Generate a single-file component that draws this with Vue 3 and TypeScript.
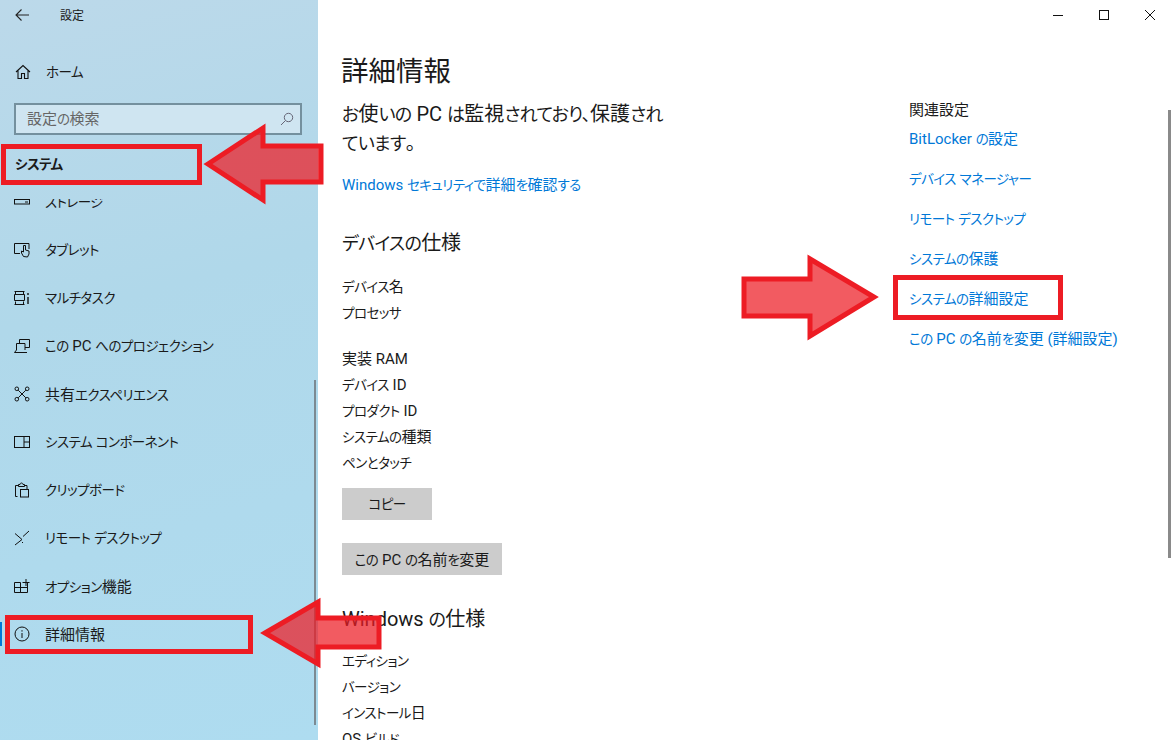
<script setup lang="ts">
import { h } from "vue"

// kana runs are narrower than kanji in the original UI font
const T = (props: { s: string }) =>
  (props.s.match(/[\u3040-\u30ff、]+|[^\u3040-\u30ff、]+/g) ?? []).map((run) =>
    /[\u3040-\u30ff、]/.test(run) ? h("span", { class: "kana" }, run) : run
  )

const navItems = [
  { label: "ストレージ", icon: "storage" },
  { label: "タブレット", icon: "tablet" },
  { label: "マルチタスク", icon: "multi" },
  { label: "この PC へのプロジェクション", icon: "project" },
  { label: "共有エクスペリエンス", icon: "share" },
  { label: "システム コンポーネント", icon: "components" },
  { label: "クリップボード", icon: "clip" },
  { label: "リモート デスクトップ", icon: "remote" },
  { label: "オプション機能", icon: "options" },
  { label: "詳細情報", icon: "info" },
]

const deviceRows = ["デバイス名", "プロセッサ"]
const deviceRows2 = ["実装 RAM", "デバイス ID", "プロダクト ID", "システムの種類", "ペンとタッチ"]
const windowsRows = ["エディション", "バージョン", "インストール日", "OS ビルド"]
const links = [
  "BitLocker の設定",
  "デバイス マネージャー",
  "リモート デスクトップ",
  "システムの保護",
  "システムの詳細設定",
  "この PC の名前を変更 (詳細設定)",
]
</script>

<template>
  <div class="window">
    <aside class="sidebar">
      <div class="titlebar">
        <svg class="back" width="16" height="16" viewBox="0 0 16 16" fill="none" stroke="#222" stroke-width="1.1">
          <path d="M2 8h13M7.5 2.5 2 8l5.5 5.5" />
        </svg>
        <span class="app-name">設定</span>
      </div>
      <div class="home">
        <svg width="16" height="16" viewBox="0 0 16 16" fill="none" stroke="#111" stroke-width="1.1">
          <path d="M1 8 8 1.5 15 8M3 6.5V14.5H6.5V9.5H9.5V14.5H13V6.5" />
        </svg>
        <span class="label"><T s="ホーム" /></span>
      </div>
      <div class="search">
        <span class="label"><T s="設定の検索" /></span>
        <svg width="14" height="14" viewBox="0 0 14 14" fill="none" stroke="#667" stroke-width="1">
          <circle cx="8.5" cy="5.5" r="4.2" />
          <path d="M5.5 8.5 1 13" />
        </svg>
      </div>
      <h2 class="section"><T s="システム" /></h2>
      <div class="nav">
        <ul>
          <li v-for="item in navItems" :key="item.label" :class="{ active: item.icon === 'info' }">
            <svg width="16" height="16" viewBox="0 0 16 16" fill="none" stroke="#111" stroke-width="1">
              <template v-if="item.icon === 'storage'">
                <rect x="0.5" y="5.5" width="15" height="4.5" />
                <path d="M11 8h3" />
              </template>
              <template v-else-if="item.icon === 'tablet'">
                <path d="M6 11.5H.5V1.5H15V7" />
                <path d="M9.5 14.5 7.5 11V9l2 1V3.5h2V8l3.5 1v3l-1.5 3z" />
              </template>
              <template v-else-if="item.icon === 'multi'">
                <path d="M.5 1.5h10M.5 14.5h10M1.5 14.5v-3M9.5 14.5v-3M.5 4.5h10v6H.5zM1.5 1.5v3M9.5 1.5v3" />
                <path d="M14 3v2M14 7v7" stroke-width="1.4" />
              </template>
              <template v-else-if="item.icon === 'project'">
                <path d="M5.5 5V1.5H15.5V9.5H11" />
                <path d="M2.5 12V5.5H11V12M.5 14.5h12.5M.5 14.5l2-2.5" />
              </template>
              <template v-else-if="item.icon === 'share'">
                <circle cx="2.8" cy="2.8" r="1.8" />
                <circle cx="13.2" cy="2.8" r="1.8" />
                <circle cx="2.8" cy="13.2" r="1.8" />
                <circle cx="13.2" cy="13.2" r="1.8" />
                <path d="M4.2 4.2 11.8 11.8M11.8 4.2 4.2 11.8" />
              </template>
              <template v-else-if="item.icon === 'components'">
                <rect x="0.5" y="2.5" width="15" height="11" />
                <path d="M10 2.5v11M10 8h5.5" />
              </template>
              <template v-else-if="item.icon === 'clip'">
                <path d="M3.5 14.5H1.5V3.5H4M11 3.5h2V7" />
                <path d="M4.5 4.5V2.5H6c0-2 3-2 3 0h1.5v2z" />
                <rect x="6.5" y="7.5" width="8" height="7.5" />
              </template>
              <template v-else-if="item.icon === 'remote'">
                <path d="M1 3.5 8 9.5 1 15M15 1 9 6.5M9 12l-1 1" />
              </template>
              <template v-else-if="item.icon === 'options'">
                <path d="M.5 4.5h6v10h-6zM.5 9.5h13M6.5 9.5v5h7v-10M8.5 4.5h7M12 1v7" />
              </template>
              <template v-else>
                <circle cx="8" cy="8" r="7" />
                <path d="M8 7v5M8 4.2v1.4" />
              </template>
            </svg>
            <span class="label"><T :s="item.label" /></span>
          </li>
        </ul>
      </div>
      <div class="side-scroll"></div>
    </aside>

    <main class="main">
      <div class="controls">
        <svg width="12" height="12" viewBox="0 0 12 12" fill="none" stroke="#111" stroke-width="1">
          <path d="M1 6.5h10" />
        </svg>
        <svg width="12" height="12" viewBox="0 0 12 12" fill="none" stroke="#111" stroke-width="1">
          <rect x="1.5" y="1.5" width="9" height="9" />
        </svg>
        <svg width="12" height="12" viewBox="0 0 12 12" fill="none" stroke="#111" stroke-width="1">
          <path d="M1 1l10 10M11 1 1 11" />
        </svg>
      </div>
      <div class="columns">
        <section class="info">
          <h1>詳細情報</h1>
          <p class="status"><T s="お使いの PC は監視されており、保護され" /><br /><T s="ています。" /></p>
          <a class="link security"><T s="Windows セキュリティで詳細を確認する" /></a>
          <h3 class="device-title"><T s="デバイスの仕様" /></h3>
          <div class="rows">
            <div v-for="r in deviceRows" :key="r"><T :s="r" /></div>
          </div>
          <div class="rows second">
            <div v-for="r in deviceRows2" :key="r"><T :s="r" /></div>
          </div>
          <button class="copy"><T s="コピー" /></button>
          <button class="rename"><T s="この PC の名前を変更" /></button>
          <h3 class="win-title"><T s="Windows の仕様" /></h3>
          <div class="rows">
            <div v-for="r in windowsRows" :key="r"><T :s="r" /></div>
          </div>
        </section>
        <section class="related">
          <div class="related-title">関連設定</div>
          <a v-for="l in links" :key="l" class="link"><T :s="l" /></a>
        </section>
      </div>
      <div class="main-scroll"></div>
    </main>

    <svg class="marks" width="1172" height="740" viewBox="0 0 1172 740">
      <g fill="none" stroke="#ed1c24" stroke-width="5">
        <rect x="3.5" y="146.5" width="196" height="36" />
        <rect x="7.5" y="617.5" width="243" height="34" />
        <rect x="895.5" y="277.5" width="165" height="40" />
      </g>
      <g fill="rgba(237,28,36,0.72)" stroke="#ed1c24" stroke-width="5" stroke-linejoin="miter">
        <path d="M208 164 263 128V146H321V182H263V200z" />
        <path d="M265 633 318 602V618H379V647H318V664z" />
        <path d="M744 279H810V259L874 297 810 336V316H744z" />
      </g>
    </svg>
  </div>
</template>

<style>
.kana {
  font-size: 0.9em;
  letter-spacing: -0.04em;
}
</style>

<style scoped>
.window {
  position: relative;
  display: flex;
  width: 1172px;
  height: 740px;
  overflow: hidden;
  background: #fff;
  color: #1a1a1a;
  font-family: Roboto, "Noto Sans CJK JP", sans-serif;
  font-size: 15px;
  font-feature-settings: "palt";
}

.sidebar {
  position: relative;
  flex: 0 0 318px;
  display: flex;
  flex-direction: column;
  height: 740px;
  background: linear-gradient(165deg, #bcd9ea 0%, #b0d8ea 40%, #aedcf0 100%);
}

.titlebar {
  flex: 0 0 30px;
  display: flex;
  align-items: center;
  padding-left: 14px;
}

.app-name {
  margin: 0 0 2px 30px;
  font-size: 12px;
}

.label {
  margin-bottom: 2px;
}

.home {
  display: flex;
  align-items: center;
  gap: 15px;
  height: 46px;
  margin-top: 19px;
  padding-left: 15px;
}

.search {
  display: flex;
  align-items: center;
  justify-content: space-between;
  box-sizing: border-box;
  height: 32px;
  margin: 8px 16px 0 14px;
  padding: 0 6px 0 11px;
  border: 2px solid #74909e;
  background: #cfe5f1;
  color: #666;
}

.search .label {
  margin-bottom: 3px;
}

.section {
  height: 22px;
  margin: 18px 0 24px 15px;
  font-size: 15px;
  font-weight: 700;
  line-height: 22px;
}

.nav {
  flex: 1;
  overflow: hidden;
}

.nav ul {
  margin: -21px 0 0;
  padding: 0;
  list-style: none;
}

.nav li {
  position: relative;
  display: flex;
  align-items: center;
  gap: 15px;
  height: 48px;
  padding-left: 14px;
  white-space: nowrap;
}

.nav li.active::before {
  content: "";
  position: absolute;
  left: 0;
  top: 12px;
  width: 2px;
  height: 24px;
  background: #0078d7;
}

.side-scroll {
  position: absolute;
  right: 2px;
  top: 380px;
  width: 2px;
  height: 345px;
  background: #7c8a92;
}

.main {
  position: relative;
  flex: 1;
  min-width: 0;
}

.controls {
  display: flex;
  justify-content: flex-end;
  gap: 34px;
  height: 30px;
  align-items: center;
  padding-right: 16px;
}

.columns {
  display: flex;
  padding-left: 24px;
}

.info {
  flex: 0 0 567px;
}

h1 {
  margin: 22px 0 0 -1px;
  font-size: 27.5px;
  font-weight: 400;
  line-height: 40px;
}

.status {
  margin: 8px 0 0;
  font-size: 20px;
  line-height: 29px;
  white-space: nowrap;
}

.link {
  display: block;
  color: #0078d7;
}

.security {
  margin-top: 15px;
  line-height: 24px;
}

h3 {
  margin: 0;
  font-size: 20px;
  font-weight: 400;
  line-height: 28px;
}

.device-title {
  margin-top: 32px;
}

.rows {
  margin-top: 16px;
}

.rows div {
  height: 26px;
  line-height: 26px;
  white-space: nowrap;
}

.rows.second {
  margin-top: 20px;
}

button {
  display: block;
  height: 32px;
  border: 0;
  background: #ccc;
  color: #1a1a1a;
  font: inherit;
  font-feature-settings: inherit;
  padding: 0 0 2px;
}

.copy {
  width: 90px;
  margin-top: 12px;
}

.rename {
  width: 160px;
  margin-top: 23px;
}

.win-title {
  margin-top: 30px;
}

.win-title + .rows {
  margin-top: 14px;
}

.related {
  padding-top: 69px;
}

.related-title {
  height: 22px;
  line-height: 22px;
  margin-bottom: 7px;
}

.related .link {
  height: 40px;
  line-height: 22px;
  white-space: nowrap;
}

.main-scroll {
  position: absolute;
  right: 1px;
  top: 110px;
  width: 3px;
  height: 448px;
  background: #8a8a8a;
}

.marks {
  position: absolute;
  left: 0;
  top: 0;
  pointer-events: none;
}
</style>
